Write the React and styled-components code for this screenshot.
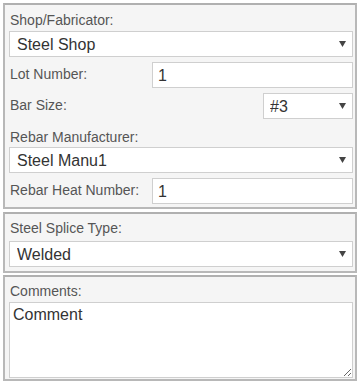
import React from 'react'
import styled, { createGlobalStyle } from 'styled-components'

const Global = createGlobalStyle`
  body {
    margin: 0;
    background: #fff;
    font-family: "Liberation Sans", Arial, sans-serif;
  }
`
const Page = styled.div`
  padding: 3px 4px 0 3px;
  display: flex;
  flex-direction: column;
  gap: 2px;
`
const Panel = styled.div`
  background: #f5f5f5;
  border: 2px solid #b8b8b8;
  border-top-color: #b0b0b0;
  padding: ${p => p.pad || '5px 2px 3px 4px'};
  margin-bottom: ${p => p.mb || 0}px;
  display: flex;
  flex-direction: column;
`
const Label = styled.label`
  display: block;
  font-size: 14px;
  line-height: 20px;
  height: 20px;
  color: #555;
  margin-top: ${p => p.mt || 0}px;
  margin-bottom: ${p => p.mb ?? 1}px;
  padding-left: 1px;
`
const Row = styled.div`
  display: flex;
  align-items: center;
  justify-content: space-between;
  margin-top: 5px;
  ${Label} {
    margin: -3px 0 0 0;
    height: auto;
  }
`
const TextInput = styled.input`
  box-sizing: border-box;
  width: ${p => p.w || 201}px;
  height: 26px;
  border: 1px solid #cfcfcf;
  background: #fff;
  font-family: "Liberation Sans", Arial, sans-serif;
  font-size: 16px;
  color: #333;
  padding: 2px 5px 0 5px;
  outline: none;
`
const SelectWrap = styled.div`
  position: relative;
  width: ${p => p.w ? `${p.w}px` : '100%'};
`
const Select = styled.select`
  box-sizing: border-box;
  appearance: none;
  display: block;
  width: 100%;
  height: 26px;
  border: 1px solid #cfcfcf;
  border-radius: 0;
  background: #fff;
  font-family: "Liberation Sans", Arial, sans-serif;
  font-size: 16px;
  color: #333;
  padding: 1px 0 0 ${p => p.pl || 7}px;
  outline: none;
`
const Arrow = styled.svg`
  position: absolute;
  right: 7px;
  top: 10px;
  pointer-events: none;
`
const TextArea = styled.textarea`
  box-sizing: border-box;
  width: 100%;
  height: 76px;
  border: 1px solid #cfcfcf;
  background: #fff;
  font-family: "Liberation Sans", Arial, sans-serif;
  font-size: 16px;
  color: #333;
  padding: 3px 3px;
  margin: 0;
  display: block;
  outline: none;
`

function Dropdown({ value, w, pl }) {
  return (
    <SelectWrap w={w}>
      <Select pl={pl} defaultValue={value}>
        <option value={value}>{value}</option>
      </Select>
      <Arrow width="7" height="6" viewBox="0 0 7 6">
        <path d="M0 0 H7 L3.5 6 Z" fill="#444" />
      </Arrow>
    </SelectWrap>
  )
}

export default function App() {
  return (
    <>
      <Global />
      <Page>
        <Panel mb={1}>
          <Label>Shop/Fabricator:</Label>
          <Dropdown value="Steel Shop" />
          <Row>
            <Label>Lot Number:</Label>
            <TextInput defaultValue="1" />
          </Row>
          <Row>
            <Label>Bar Size:</Label>
            <Dropdown value="#3" w={90} pl={6} />
          </Row>
          <Label mt={8} mb={0}>Rebar Manufacturer:</Label>
          <Dropdown value="Steel Manu1" />
          <Row>
            <Label>Rebar Heat Number:</Label>
            <TextInput defaultValue="1" />
          </Row>
        </Panel>
        <Panel pad="4px 2px 4px 4px">
          <Label mb={3}>Steel Splice Type:</Label>
          <Dropdown value="Welded" />
        </Panel>
        <Panel pad="4px 2px 1px 4px">
          <Label mb={1}>Comments:</Label>
          <TextArea defaultValue="Comment" />
        </Panel>
      </Page>
    </>
  )
}
